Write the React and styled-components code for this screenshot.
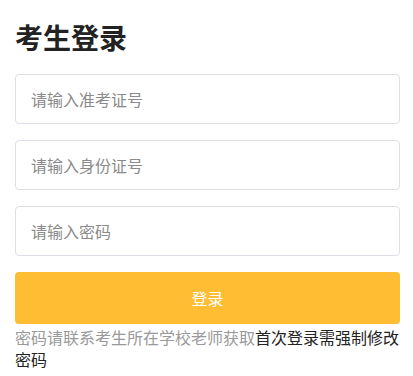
import React from "react";
import styled, { createGlobalStyle } from "styled-components";

const GlobalStyle = createGlobalStyle`
  body {
    margin: 0;
    background: #fff;
    font-family: "Noto Sans CJK SC", "Noto Sans", sans-serif;
  }
`;

const Page = styled.div`
  padding: 17px 13px 0 15px;
`;

const Title = styled.h1`
  margin: 0 0 17px;
  font-size: 28px;
  line-height: 40px;
  font-weight: 700;
  color: #222;
`;

const Form = styled.form`
  display: flex;
  flex-direction: column;
  gap: 16px;
`;

const Input = styled.input`
  box-sizing: border-box;
  width: 100%;
  height: 50px;
  padding: 0 15px;
  border: 1px solid #dcdfe6;
  border-radius: 4px;
  font-family: inherit;
  font-size: 16px;
  color: #333;
  outline: none;
  &::placeholder {
    color: #8a8a8a;
  }
`;

const Submit = styled.button`
  height: 52px;
  border: none;
  border-radius: 4px;
  background: #febd33;
  color: #fff;
  font-family: inherit;
  font-size: 16px;
  cursor: pointer;
`;

const Note = styled.p`
  margin: 2px 0 0;
  font-size: 16px;
  line-height: 22px;
  color: #222;
`;

const Hint = styled.span`
  color: #999;
`;

export default function App() {
  return (
    <>
      <GlobalStyle />
      <Page>
        <Title>考生登录</Title>
        <Form onSubmit={(e) => e.preventDefault()}>
          <Input placeholder="请输入准考证号" />
          <Input placeholder="请输入身份证号" />
          <Input type="password" placeholder="请输入密码" />
          <Submit type="submit">登录</Submit>
        </Form>
        <Note>
          <Hint>密码请联系考生所在学校老师获取</Hint>首次登录需强制修改密码
        </Note>
      </Page>
    </>
  );
}
